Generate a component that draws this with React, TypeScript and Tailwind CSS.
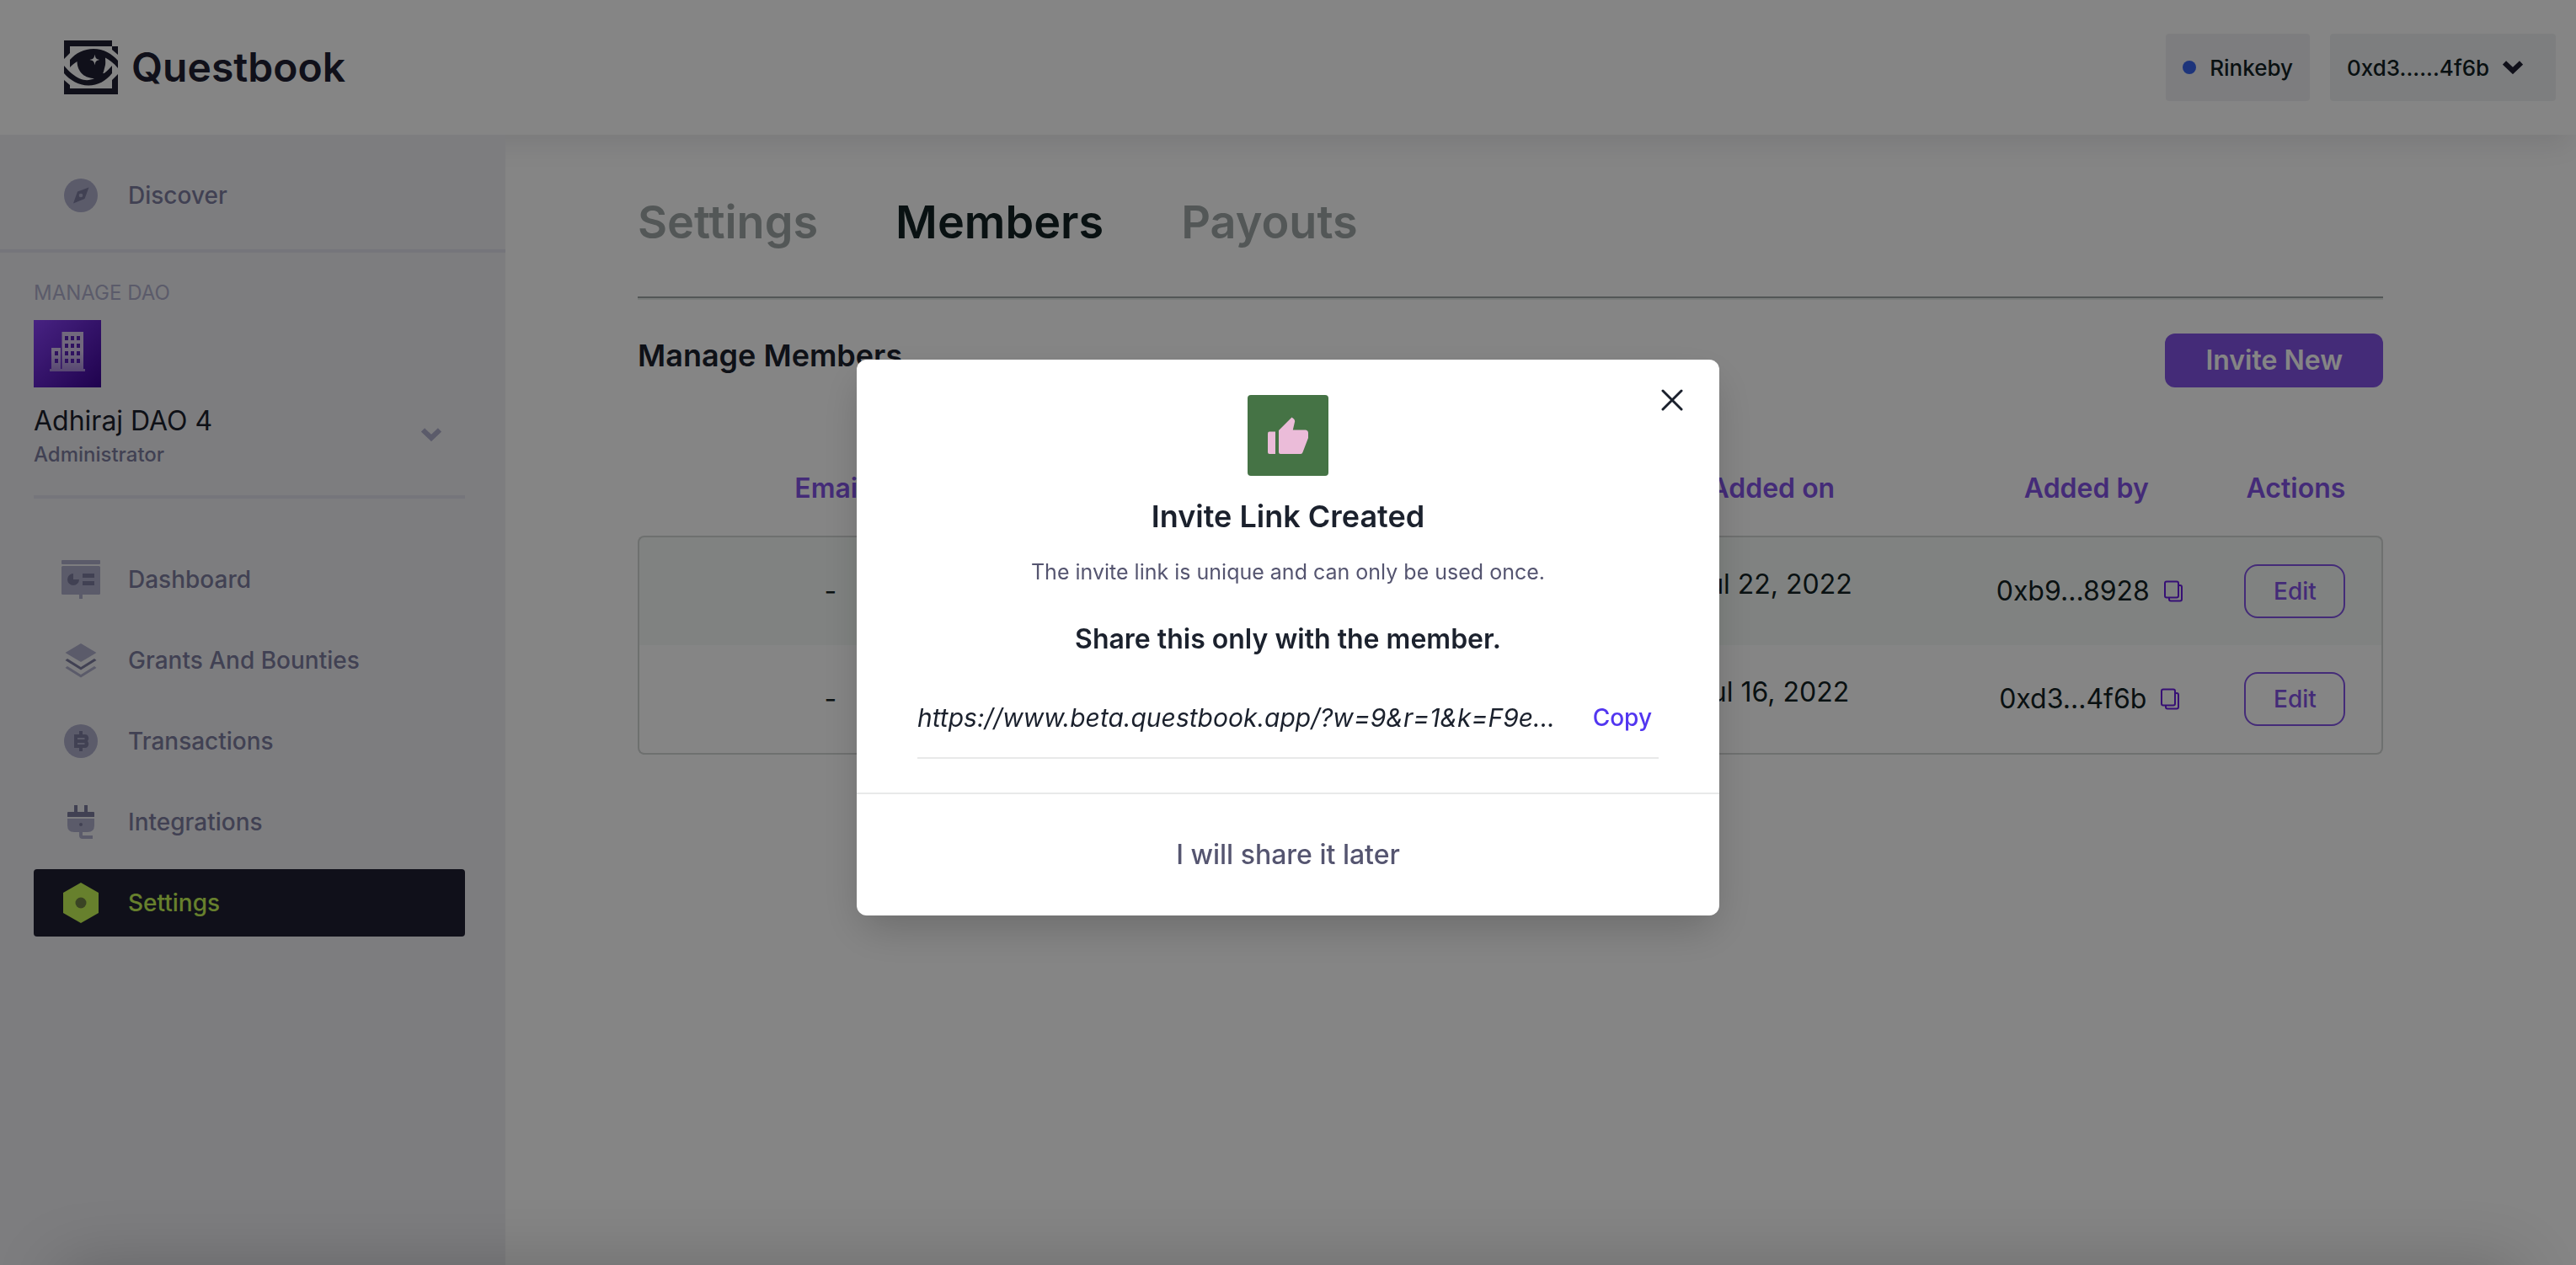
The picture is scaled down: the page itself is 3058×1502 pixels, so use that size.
import React from "react";

function LogoMark() {
  return (
    <svg viewBox="0 0 64 64" className="size-16 shrink-0" aria-hidden="true">
      <g fill="#1f1f33">
        <path d="M0 0H57V7H7V15L0 22Z" />
        <path d="M57 7H64V17L57 11Z" />
        <path d="M0 47L7 53V57H57V47L64 40V64H0Z" />
        <path d="M7 23C14 15 24 10 35 10C47 10 57 16 64 24V33C59 27 54 23 49 20.500C49 23 49.500 26 49 29L47 37C45 41 48 40 57 30V39C50 48 40 53.500 29 53.500C17 53.500 7 47 0 39V30C6 37 12 42.500 19 45.500C25 48 31 47.500 36 45C26 45 16 39 15.500 25C12 27 9 30 7 32Z" />
      </g>
      <path d="M36.500 16.500C37.200 21 38 22 42 23C38 24 37.200 25 36.500 29.500C35.800 25 35 24 30.500 23C35 22 35.800 21 36.500 16.500Z" fill="#fff" />
    </svg>
  );
}

function ChevronIcon({ className }: { className: string }) {
  return (
    <svg viewBox="0 0 24 16" className={className} fill="none" stroke="currentColor" strokeWidth="6" aria-hidden="true">
      <path d="M2 2.500L12 12L22 2.500" />
    </svg>
  );
}

const light = "#afafcc";
const dark = "#7d7da0";

function Icon({ children }: { children: React.ReactNode }) {
  return (
    <svg viewBox="0 0 48 48" className="size-12 shrink-0" aria-hidden="true">
      {children}
    </svg>
  );
}

const icons = {
  discover: (
    <Icon>
      <circle cx="24" cy="24" r="20" fill={light} />
      <path d="M33.500 14.500L28.500 28L15 33.500L20 19.500Z" fill={dark} />
      <circle cx="24" cy="24" r="2.300" fill={light} />
    </Icon>
  ),
  dashboard: (
    <Icon>
      <rect x="1" y="1" width="46" height="5" rx="1" fill={light} />
      <rect x="1" y="8" width="46" height="34" rx="1.500" fill={light} />
      <rect x="22" y="42" width="4" height="5" fill={light} />
      <path d="M15 17A7 7 0 1 0 22 24H15Z" fill={dark} />
      <path d="M26 17H40V22H26ZM26 26H40V31H26Z" fill={dark} />
    </Icon>
  ),
  grants: (
    <Icon>
      <path d="M24 4L42.500 15L24 26L5.500 15Z" fill={light} />
      <path d="M8 22L24 32L40 22L42.500 24L24 35.500L5.500 24Z" fill={dark} />
      <path d="M8 31L24 41L40 31L42.500 33L24 44.500L5.500 33Z" fill={light} />
    </Icon>
  ),
  transactions: (
    <Icon>
      <circle cx="24" cy="24" r="20" fill={light} />
      <path d="M22 12H26V16H29C33 16 34.500 21 32 24C34.500 27 33 32 29 32H26V36H22V32H16V16H22ZM20 20V22H28.500V20ZM20 26V28H28.500V26Z" fill={dark} fillRule="evenodd" />
    </Icon>
  ),
  integrations: (
    <Icon>
      <path d="M16 4H20V12H28V4H32V12H39Q40 12 40 13V18H8V13Q8 12 9 12H16Z" fill={dark} />
      <path d="M8 20H40V28Q40 36 32 36H26V40H38V44H26Q22 44 22 40V36H16Q8 36 8 28Z" fill={light} />
      <circle cx="24" cy="27" r="2" fill={dark} />
    </Icon>
  ),
  settings: (
    <Icon>
      <path d="M24 0L45 12V36L24 48L3 36V12Z" fill="#c6f556" />
      <circle cx="24" cy="24" r="6.500" fill="#708346" />
    </Icon>
  ),
};

function NavItem({ icon, label, active }: { icon: React.ReactNode; label: string; active?: boolean }) {
  return (
    <a
      href="#"
      aria-current={active ? "page" : undefined}
      className={
        active
          ? "flex h-20 items-center gap-8 rounded bg-[#1f1f33] px-8 text-[28px] font-medium text-[#c6f556]"
          : "flex h-20 items-center gap-8 rounded px-8 text-[28px] font-medium text-[#7d7da0]"
      }
    >
      {icon}
      {label}
    </a>
  );
}

function DaoBadge() {
  const columns = [37, 44, 51];
  const rows = [19, 28, 37, 46];
  return (
    <svg viewBox="0 0 80 80" className="size-20" aria-hidden="true">
      <defs>
        <linearGradient id="dao-bg" x1="0" y1="0" x2="1" y2="1">
          <stop offset="0" stopColor="#8a43fa" />
          <stop offset="1" stopColor="#3c0596" />
        </linearGradient>
        <linearGradient id="dao-building" x1="0" y1="0" x2="0" y2="1">
          <stop offset="0.500" stopColor="#d8c8f0" />
          <stop offset="1" stopColor="#a888dc" />
        </linearGradient>
      </defs>
      <rect width="80" height="80" fill="url(#dao-bg)" />
      <path d="M33.500 14H59V58H61V61H19V58H21V33H32V58H33.500Z" fill="url(#dao-building)" />
      <g fill="#5a22b8">
        {rows.map((y) => columns.map((x) => <rect key={`${x}-${y}`} x={x} y={y} width="4" height="5" />))}
        <rect x="25" y="37" width="4" height="5" />
        <rect x="25" y="46" width="4" height="5" />
      </g>
    </svg>
  );
}

function CopyIcon() {
  return (
    <svg viewBox="0 0 24 26" className="h-[26px] w-6" fill="none" stroke="#6a1fe0" strokeWidth="2" aria-hidden="true">
      <rect x="2" y="1.500" width="16" height="19" rx="2" />
      <path d="M18 6H20Q22 6 22 8V22.500Q22 24.500 20 24.500H9Q7 24.500 7 22.500V20.500" />
    </svg>
  );
}

const members = [
  { email: "-", date: "Jul 22, 2022", by: "0xb9...8928" },
  { email: "-", date: "Jul 16, 2022", by: "0xd3...4f6b" },
];

function MembersTable() {
  return (
    <table className="mt-[84px] w-full table-fixed border-separate border-spacing-0 text-center">
      <colgroup>
        <col className="w-[22%]" />
        <col />
        <col className="w-[22%]" />
        <col className="w-[14%]" />
        <col className="w-[10%]" />
      </colgroup>
      <thead>
        <tr className="text-[32px] leading-[72px] text-[#8354e6]">
          <th className="pb-5 font-semibold">Email</th>
          <td />
          <th className="pb-5 font-semibold">Added on</th>
          <th className="pb-5 font-semibold">Added by</th>
          <th className="pb-5 font-semibold">Actions</th>
        </tr>
      </thead>
      <tbody className="text-[32px] text-[#122224] [&>tr:first-child]:bg-[#f5faf7] [&>tr:first-child>td]:border-t-2 [&>tr:first-child>td:first-child]:rounded-tl-lg [&>tr:first-child>td:last-child]:rounded-tr-lg [&>tr:last-child>td]:border-b-2 [&>tr:last-child>td:first-child]:rounded-bl-lg [&>tr:last-child>td:last-child]:rounded-br-lg">
        {members.map((m) => (
          <tr key={m.by} className="h-[130px]">
            <td className="border-l-2 border-[#d3d6d5]">{m.email}</td>
            <td className="border-[#d3d6d5]" />
            <td className="border-[#d3d6d5] pb-4">{m.date}</td>
            <td className="border-[#d3d6d5]">
              <span className="flex items-center justify-center gap-4 pl-2">
                {m.by}
                <button type="button" aria-label={`Copy ${m.by}`}>
                  <CopyIcon />
                </button>
              </span>
            </td>
            <td className="border-r-2 border-[#d3d6d5]">
              <button type="button" className="h-16 w-[120px] rounded-2xl border-2 border-[#8354e6] text-[28px] font-medium text-[#8354e6]">
                Edit
              </button>
            </td>
          </tr>
        ))}
      </tbody>
    </table>
  );
}

function InviteDialog() {
  return (
    <div className="fixed inset-0 flex items-start justify-center bg-[rgba(0,0,0,0.48)] pt-[427px]">
      <section
        role="dialog"
        aria-modal="true"
        aria-labelledby="invite-title"
        className="relative w-[1024px] rounded-xl bg-white pt-[42px] text-center text-[#1f1f33] shadow-[0_20px_50px_-6px_rgba(0,0,0,0.2)]"
      >
        <button type="button" aria-label="Close" className="absolute top-6 right-8 flex size-12 items-center justify-center">
          <svg viewBox="0 0 26 26" className="size-[26px]" fill="none" stroke="#1b212d" strokeWidth="3" strokeLinecap="round" aria-hidden="true">
            <path d="M2 2L24 24M24 2L2 24" />
          </svg>
        </button>
        <span className="mx-auto flex size-24 items-center justify-center rounded bg-[#457345]">
          <svg viewBox="0 0 48 44" className="h-11 w-12" fill="#ebbcd9" aria-hidden="true">
            <path d="M2 17.500H9V44H2Q0 44 0 42V19.500Q0 17.500 2 17.500Z" />
            <path d="M13 16L28.500 0.500L31 2.500Q32.500 4 32 6L29.800 15.500H45Q48 16 48 19V25L41.500 42Q41 44 39 44H15Q13 44 13 42Z" />
          </svg>
        </span>
        <h2 id="invite-title" className="mt-6 text-[36px] leading-[48px] font-semibold text-[#1b212d]">
          Invite Link Created
        </h2>
        <p className="mt-[22px] text-[25px] leading-10 text-[#555570]">The invite link is unique and can only be used once.</p>
        <p className="mt-[38px] text-[32px] leading-[44px] font-semibold text-[#1b212d]">Share this only with the member.</p>
        <div className="mx-[72px] mt-6 flex h-[96px] items-center justify-between border-b-2 border-[#e8e9e9] pr-2">
          <p className="text-[30px] whitespace-nowrap text-[#1b212d] italic">https://www.beta.questbook.app/?w=9&amp;r=1&amp;k=F9e...</p>
          <button type="button" className="text-[28px] font-medium text-[#5236f0]">
            Copy
          </button>
        </div>
        <div className="mt-10 flex h-[146px] items-center justify-center border-t-2 border-[#e8e9e9]">
          <button type="button" className="text-[32px] font-medium text-[#555570]">
            I will share it later
          </button>
        </div>
      </section>
    </div>
  );
}

export default function App() {
  return (
    <div className="flex min-h-screen flex-col overflow-hidden bg-white font-['Inter',sans-serif] text-[#122224]">
      <header className="flex h-40 items-center justify-between bg-white pr-6 pl-[76px] shadow-[0_20px_30px_-10px_rgba(31,31,51,0.1)]">
        <a href="#" className="flex items-center gap-4 text-[48px] leading-none font-semibold text-[#1f1f33]">
          <LogoMark />
          Questbook
        </a>
        <div className="flex gap-6 text-[26px] font-medium">
          <div className="flex h-20 items-center gap-4 rounded bg-[#f0f0f4] px-5">
            <span className="size-4 rounded-full bg-[#3865ec]" />
            Rinkeby
          </div>
          <button type="button" className="flex h-20 w-[268px] items-center gap-4 rounded bg-[#f0f2f4] pl-5">
            0xd3......4f6b
            <ChevronIcon className="h-4 w-6 text-[#1f1f33]" />
          </button>
        </div>
      </header>

      <div className="flex flex-1">
        <aside className="w-[600px] shrink-0 bg-[#f0f0f4]">
          <div className="border-b-4 border-[#e0e0ec] px-10 pt-8 pb-6">
            <NavItem icon={icons.discover} label="Discover" />
          </div>
          <div className="pr-12 pl-10">
            <p className="pt-8 text-2xl text-[#afafcc]">MANAGE DAO</p>
            <div className="mt-4">
              <DaoBadge />
            </div>
            <button type="button" className="flex w-full items-center justify-between border-b-4 border-[#e0e0ec] pt-4 pr-7 pb-8 text-left">
              <span>
                <span className="block text-[32px] leading-[48px] text-[#1b212d]">Adhiraj DAO 4</span>
                <span className="block text-2xl font-medium text-[#7d7da0]">Administrator</span>
              </span>
              <ChevronIcon className="h-4 w-6 text-[#afafcc]" />
            </button>
            <nav className="mt-14 flex flex-col gap-4">
              <NavItem icon={icons.dashboard} label="Dashboard" />
              <NavItem icon={icons.grants} label="Grants And Bounties" />
              <NavItem icon={icons.transactions} label="Transactions" />
              <NavItem icon={icons.integrations} label="Integrations" />
              <NavItem icon={icons.settings} label="Settings" active />
            </nav>
          </div>
        </aside>

        <main className="flex-1 pr-[229px] pl-[157px]">
          <nav className="flex gap-[92px] border-b-2 border-[#a0a7a7] pt-[68px] pb-[52px] text-[54px] leading-[72px] font-semibold text-[#a0a7a7] shadow-[0_2px_0_#e7ecea]">
            <a href="#">Settings</a>
            <a href="#" aria-current="page" className="text-[#122224]">
              Members
            </a>
            <a href="#">Payouts</a>
          </nav>
          <div className="mt-[42px] flex items-start justify-between">
            <h1 className="text-[36px] leading-[52px] font-semibold text-[#1b212d]">Manage Members</h1>
            <button type="button" className="h-16 rounded-xl bg-[#8354e6] px-12 text-[32px] font-semibold text-white">
              Invite New
            </button>
          </div>
          <MembersTable />
        </main>
      </div>

      <InviteDialog />
      <div className="pointer-events-none fixed inset-x-[70px] -bottom-20 h-20 shadow-[0_0_80px_rgba(0,0,0,0.2)]" />
    </div>
  );
}
